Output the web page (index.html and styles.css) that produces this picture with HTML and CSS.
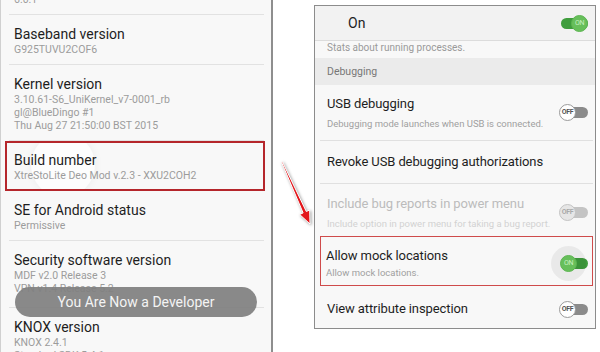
FILE: index.html
```html
<!DOCTYPE html>
<html lang="en">
<head>
    <meta charset="UTF-8">
    <meta name="viewport" content="width=device-width, initial-scale=1.0">
    <title>Enable Developer Options</title>
    <link rel="stylesheet" href="styles.css">
</head>
<body>
    <div class="shot">
        <!-- About device screen -->
        <section class="phone about">
            <div class="item cut"><p class="sub">6.0.1</p></div>
            <div class="item">
                <h3>Baseband version</h3>
                <p class="sub">G925TUVU2COF6</p>
            </div>
            <div class="item">
                <h3>Kernel version</h3>
                <p class="sub">3.10.61-S6_UniKernel_v7-0001_rb<br>gl@BlueDingo #1<br>Thu Aug 27 21:50:00 BST 2015</p>
            </div>
            <div class="item marked">
                <span class="ripple"></span>
                <h3>Build number</h3>
                <p class="sub">XtreStoLite Deo Mod v.2.3 - XXU2COH2</p>
            </div>
            <div class="item">
                <h3>SE for Android status</h3>
                <p class="sub">Permissive</p>
            </div>
            <div class="item security">
                <h3>Security software version</h3>
                <p class="sub">MDF v2.0 Release 3<br>VPN v1.4 Release 5.2</p>
            </div>
            <div class="item">
                <h3>KNOX version</h3>
                <p class="sub">KNOX 2.4.1<br>Standard SDK 5.4.1</p>
            </div>
            <div class="toast">You Are Now a Developer</div>
        </section>

        <div class="pointer">
            <svg width="36" height="70" viewBox="0 0 36 70">
                <polygon points="3.6,4.3 4.4,3.7 28.3,53.5 31.7,52 32,66 21.7,56.5 25.1,54.9"
                         fill="#e3161b" stroke="#fff" stroke-width="1" stroke-linejoin="round"/>
            </svg>
        </div>

        <!-- Developer options screen -->
        <section class="phone dev">
            <div class="on-row">
                <span class="on-label">On</span>
                <span class="switch on"><span class="knob">ON</span></span>
            </div>
            <p class="stats">Stats about running processes.</p>
            <div class="cat">Debugging</div>
            <div class="row usb">
                <div class="text">
                    <h3>USB debugging</h3>
                    <p class="sub">Debugging mode launches when USB is connected.</p>
                </div>
                <span class="switch"><span class="knob">OFF</span></span>
            </div>
            <div class="row revoke">
                <div class="text">
                    <h3>Revoke USB debugging authorizations</h3>
                </div>
            </div>
            <div class="row bugs disabled">
                <div class="text">
                    <h3>Include bug reports in power menu</h3>
                    <p class="sub">Include option in power menu for taking a bug report.</p>
                </div>
                <span class="switch"><span class="knob">OFF</span></span>
            </div>
            <div class="row mock">
                <div class="text">
                    <h3>Allow mock locations</h3>
                    <p class="sub">Allow mock locations.</p>
                </div>
                <span class="switch on pressed"><span class="knob">ON</span></span>
            </div>
            <div class="row inspect">
                <div class="text">
                    <h3>View attribute inspection</h3>
                </div>
                <span class="switch"><span class="knob">OFF</span></span>
            </div>
        </section>
    </div>
</body>
</html>
```

FILE: styles.css
```css
body {
    margin: 0;
    background: #fff;
    font-family: Roboto, "Liberation Sans", sans-serif;
    overflow: hidden;
}
h3, p {
    margin: 0;
    font-weight: normal;
}
.shot {
    display: flex;
    align-items: flex-start;
    width: 600px;
    height: 352px;
}

/* left screen */
.about {
    position: relative;
    width: 270px;
    height: 352px;
    overflow: hidden;
    background: #f8f8f8;
    border-left: 1px solid #d0d0d0;
    border-right: 2px solid #8e8e8e;
}
.item {
    position: relative;
    margin: 0 7px 0 8px;
    padding: 10px 5px 8px;
    border-bottom: 1px solid #e2e2e2;
}
.item h3 {
    position: relative;
    font-size: 14px;
    line-height: 18px;
    color: #1e1e1e;
}
.item .sub {
    position: relative;
    font-size: 10.5px;
    line-height: 13px;
    color: #9c9c9c;
}
.item.cut {
    margin-top: -7px;
    padding-top: 0;
}
.item.marked {
    margin: 0 6px 0 4px;
    padding: 8px 7px 7px;
    border: 2px solid #b5262b;
    overflow: hidden;
}
.item.security {
    padding-bottom: 12px;
}
.ripple {
    position: absolute;
    left: 24px;
    top: -10px;
    width: 64px;
    height: 64px;
    border-radius: 50%;
    background: #fdfdfd;
    box-shadow: 0 0 10px rgba(0, 0, 0, 0.05);
}
.toast {
    position: absolute;
    left: 14px;
    top: 287px;
    width: 242px;
    height: 30px;
    border-radius: 15px;
    background: rgba(128, 128, 128, 0.93);
    color: #f4f4f4;
    font-size: 14px;
    line-height: 30px;
    text-align: center;
}

/* arrow */
.pointer {
    width: 41px;
    padding-top: 158px;
}
.pointer svg {
    display: block;
    margin-left: 5px;
    filter: drop-shadow(1px 1px 1.5px rgba(0, 0, 0, 0.4));
}

/* right screen */
.dev {
    margin-top: 5px;
    width: 280px;
    height: 322px;
    overflow: hidden;
    background: #f8f8f8;
    border: 1px solid #8c8c8c;
}
.on-row {
    display: flex;
    align-items: center;
    justify-content: space-between;
    height: 34px;
    padding: 0 7px 0 33px;
    background: #f2f2f2;
    border-bottom: 1px solid #dcdcdc;
}
.on-label {
    font-size: 14px;
    color: #1e1e1e;
}
.stats {
    height: 17px;
    padding-left: 12px;
    font-size: 10px;
    line-height: 13px;
    color: #9a9a9a;
}
.cat {
    height: 27px;
    padding-left: 12px;
    background: #ebebeb;
    font-size: 10.5px;
    line-height: 27px;
    color: #777;
}
.row {
    display: flex;
    align-items: center;
    justify-content: space-between;
    margin: 0 2px 0 5px;
    padding: 0 5px 0 7px;
    border-bottom: 1px solid #e0e0e0;
}
.row h3 {
    font-size: 13px;
    line-height: 18px;
    color: #1e1e1e;
    letter-spacing: -0.1px;
}
.row .sub {
    font-size: 9.5px;
    line-height: 13px;
    color: #a0a0a0;
    margin-top: 4px;
}
.row.usb {
    padding-top: 10px;
    padding-bottom: 10px;
}
.row.revoke {
    padding-top: 12px;
    padding-bottom: 12px;
}
.row.bugs {
    padding-top: 11px;
    padding-bottom: 4px;
    border-bottom: none;
}
.row.disabled h3 {
    color: #bcbcbc;
}
.row.disabled .sub {
    color: #d2d2d2;
}
.row.mock {
    margin: 2px 2px 0 5px;
    padding: 10px 4px 6px 5px;
    border: 1.5px solid #cf4b4b;
}
.row.mock .sub {
    margin-top: 1px;
}
.row.inspect {
    padding-top: 14px;
    padding-bottom: 10px;
    border-bottom: none;
}

/* toggles */
.switch {
    position: relative;
    flex: none;
    width: 29px;
    height: 17px;
}
.switch::before {
    content: "";
    position: absolute;
    left: 2px;
    right: 0;
    top: 3px;
    height: 11px;
    border-radius: 6px;
    background: #8b8b8b;
}
.knob {
    position: absolute;
    left: 0;
    top: 0;
    width: 15px;
    height: 15px;
    border: 1px solid #9a9a9a;
    border-radius: 50%;
    background: #fff;
    color: #555;
    font-size: 7px;
    font-weight: bold;
    line-height: 15px;
    text-align: center;
    letter-spacing: -0.3px;
}
.switch.on::before {
    background: #3f9d3d;
}
.switch.on .knob {
    left: auto;
    right: 0;
    border-color: #5db552;
    background: #67bf5b;
    color: #c9efc2;
    font-weight: normal;
}
.switch.on.pressed .knob {
    left: 1px;
    right: auto;
    box-shadow: 0 0 0 9px rgba(0, 0, 0, 0.06);
}
.disabled .switch::before {
    background: #c4c4c4;
}
.disabled .knob {
    background: #e6e6e6;
    border-color: #c4c4c4;
    color: #aaa;
}
```
